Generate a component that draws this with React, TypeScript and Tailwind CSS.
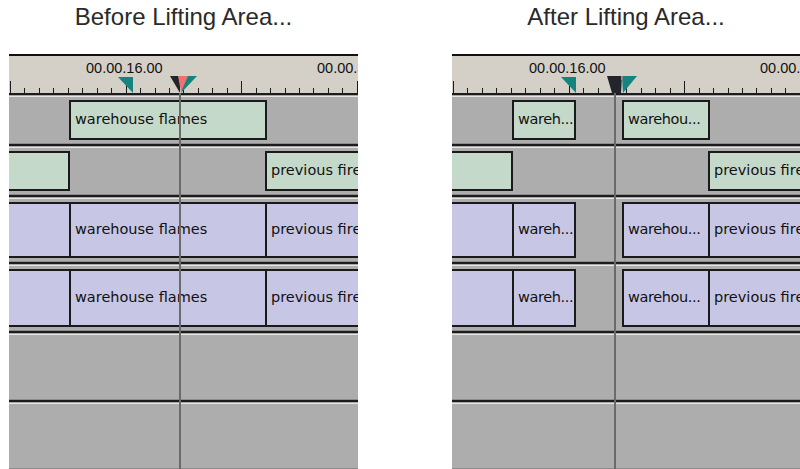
import clsx from "clsx";

type Seg = {
  w: string;
  label?: string;
  tone?: "green" | "blue";
  noLeft?: boolean;
  overlap?: boolean;
  tight?: boolean;
};

type TrackDef = { h: string; segs: Seg[] };

const beforeTracks: TrackDef[] = [
  {
    h: "h-[46px]",
    segs: [{ w: "w-[60px]" }, { w: "w-[198px]", label: "warehouse flames", tone: "green" }],
  },
  {
    h: "h-[46px]",
    segs: [
      { w: "w-[61px]", tone: "green", noLeft: true },
      { w: "w-[195px]" },
      { w: "w-[120px]", label: "previous fire", tone: "green" },
    ],
  },
  {
    h: "h-[62px]",
    segs: [
      { w: "w-[62px]", tone: "blue", noLeft: true },
      { w: "w-[198px]", label: "warehouse flames", tone: "blue", overlap: true },
      { w: "w-[120px]", label: "previous fire", tone: "blue", overlap: true },
    ],
  },
  {
    h: "h-[64px]",
    segs: [
      { w: "w-[62px]", tone: "blue", noLeft: true },
      { w: "w-[198px]", label: "warehouse flames", tone: "blue", overlap: true },
      { w: "w-[120px]", label: "previous fire", tone: "blue", overlap: true },
    ],
  },
  { h: "h-[64px]", segs: [] },
  { h: "h-[64px]", segs: [] },
];

const afterTracks: TrackDef[] = [
  {
    h: "h-[46px]",
    segs: [
      { w: "w-[60px]" },
      { w: "w-[64px]", label: "wareh...", tone: "green", tight: true },
      { w: "w-[46px]" },
      { w: "w-[88px]", label: "warehou...", tone: "green", tight: true },
    ],
  },
  {
    h: "h-[46px]",
    segs: [
      { w: "w-[61px]", tone: "green", noLeft: true },
      { w: "w-[195px]" },
      { w: "w-[120px]", label: "previous fire", tone: "green" },
    ],
  },
  {
    h: "h-[62px]",
    segs: [
      { w: "w-[62px]", tone: "blue", noLeft: true },
      { w: "w-[64px]", label: "wareh...", tone: "blue", overlap: true, tight: true },
      { w: "w-[46px]" },
      { w: "w-[88px]", label: "warehou...", tone: "blue", tight: true },
      { w: "w-[120px]", label: "previous fire", tone: "blue", overlap: true },
    ],
  },
  {
    h: "h-[64px]",
    segs: [
      { w: "w-[62px]", tone: "blue", noLeft: true },
      { w: "w-[64px]", label: "wareh...", tone: "blue", overlap: true, tight: true },
      { w: "w-[46px]" },
      { w: "w-[88px]", label: "warehou...", tone: "blue", tight: true },
      { w: "w-[120px]", label: "previous fire", tone: "blue", overlap: true },
    ],
  },
  { h: "h-[64px]", segs: [] },
  { h: "h-[64px]", segs: [] },
];

function Sep() {
  return (
    <div>
      <div className="h-px bg-[#8c8c8c]" />
      <div className="h-[2px] bg-[#1c1c1c]" />
      <div className="h-px bg-[#a8a8a8]" />
      <div className="h-px bg-[#e6e6e6]" />
    </div>
  );
}

function Track({ h, segs }: TrackDef) {
  return (
    <div className={clsx(h, "flex items-stretch bg-[#adadad] py-[3px]")}>
      {segs.map((s, i) =>
        s.tone ? (
          <div
            key={i}
            className={clsx(
              s.w,
              "flex shrink-0 items-center overflow-hidden whitespace-nowrap border-2 border-[#1a1a1a] pl-[4px] text-[14.5px] text-[#111]",
              s.tone === "blue" ? "bg-[#c7c7e5]" : "bg-[#c5d9ca]",
              s.noLeft && "border-l-0",
              s.overlap && "-ml-[2px]",
              s.tight && "tracking-[-0.4px]"
            )}
          >
            {s.label}
          </div>
        ) : (
          <div key={i} className={clsx(s.w, "shrink-0")} />
        )
      )}
    </div>
  );
}

// ruler ticks, one every 14.45px, a tall one every 8th
const ticks = Array.from({ length: 26 }, (_, i) => i);

function Ruler({ after }: { after?: boolean }) {
  return (
    <div className="relative h-[39px] border-t-2 border-[#111] bg-[#d4d0c8] font-['Liberation_Sans',Arial,sans-serif] text-[14.5px] leading-none text-[#111]">
      <span className="absolute left-[77px] top-[5px]">00.00.16.00</span>
      <span className="absolute left-[308px] top-[5px]">00.00.32.00</span>
      <svg className="absolute inset-0" width="349" height="37" viewBox="0 0 349 37">
        {ticks.map((i) => {
          const x = Math.round(1 + i * 14.45) + 0.5;
          const tall = i % 8 === 0;
          return (
            <line key={i} x1={x} x2={x} y1={tall ? 25 : 32} y2={37} stroke="#1a1a1a" strokeWidth="1" />
          );
        })}
        <polygon points="109,21 124,21 124,37" fill="#15847e" />
        {after ? (
          <>
            <polygon points="170,20 185,20 171,37" fill="#15847e" />
            <polygon points="155,20 170,20 169,37 160,37" fill="#24242c" />
            <rect x="169" y="20" width="1.5" height="4" fill="#ee6f6f" />
          </>
        ) : (
          <>
            <polygon points="175,20 188,20 172,37" fill="#15847e" />
            <polygon points="161,20 171,20 171,37" fill="#24242c" />
            <polygon points="169,20 179,20 172,36" fill="#ee7272" />
          </>
        )}
      </svg>
    </div>
  );
}

function Panel({ title, tracks, playhead, after, className }: {
  title: string;
  tracks: TrackDef[];
  playhead: string;
  after?: boolean;
  className?: string;
}) {
  return (
    <div className={clsx("flex flex-col", className)}>
      <div className="h-[54px] pt-[5px] text-center font-['Liberation_Sans',Arial,sans-serif] text-[24px] leading-[24px] text-[#2a2a2a]">
        {title}
      </div>
      <div className="overflow-hidden font-['DejaVu_Sans',Verdana,sans-serif]">
        <Ruler after={after} />
        <div className="relative">
          <div>
            <div className="h-[2px] bg-[#1c1c1c]" />
            <div className="h-px bg-[#a8a8a8]" />
            <div className="h-px bg-[#e6e6e6]" />
          </div>
          {tracks.map((t, i) => (
            <div key={i}>
              {i > 0 && <Sep />}
              <Track {...t} />
            </div>
          ))}
          <div className="h-px bg-[#8c8c8c]" />
          <div className={clsx("absolute top-0 bottom-0 w-[2px] bg-[#6a6a6a]", playhead)} />
        </div>
      </div>
    </div>
  );
}

export default function App() {
  return (
    <div className="flex h-[469px] w-[800px] overflow-hidden bg-white">
      <Panel
        title="Before Lifting Area..."
        tracks={beforeTracks}
        playhead="left-[170px]"
        className="ml-[9px] w-[349px]"
      />
      <Panel
        title="After Lifting Area..."
        tracks={afterTracks}
        playhead="left-[162px]"
        after
        className="ml-[94px] w-[348px]"
      />
    </div>
  );
}
